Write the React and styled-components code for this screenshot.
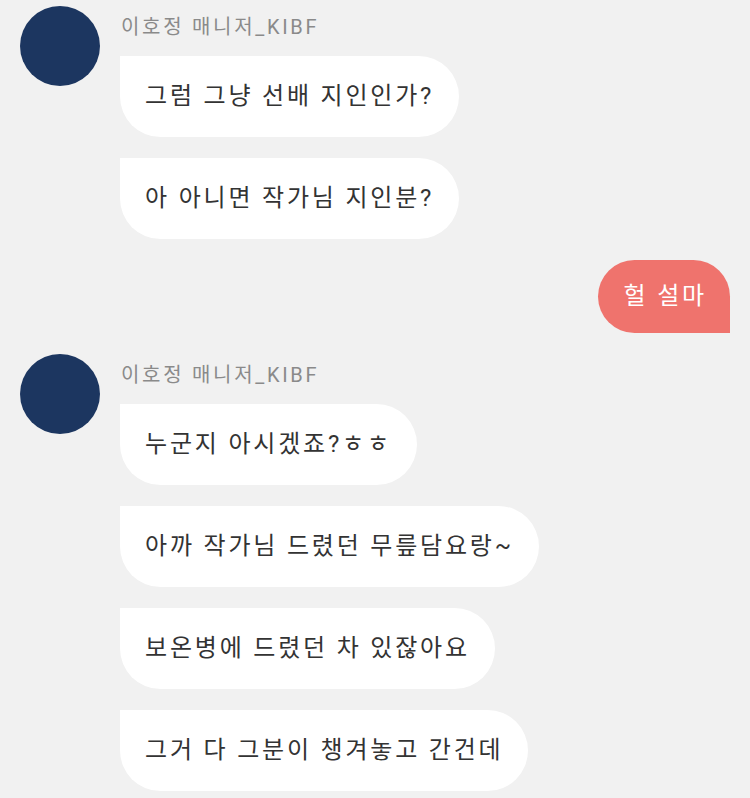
import React from "react";
import styled, { createGlobalStyle } from "styled-components";

const GlobalStyle = createGlobalStyle`
  html, body {
    margin: 0;
    padding: 0;
    background: #f1f1f1;
  }
  body {
    font-family: Roboto, "Noto Sans CJK KR", sans-serif;
  }
`;

const Page = styled.div`
  width: 750px;
  height: 798px;
  overflow: hidden;
  background: #f1f1f1;
  display: flex;
  flex-direction: column;
  gap: 21px;
  padding-top: 6px;
  box-sizing: border-box;
`;

const Group = styled.div`
  display: flex;
  align-items: flex-start;
  gap: 20px;
  padding-left: 20px;
`;

const Avatar = styled.div`
  width: 80px;
  height: 80px;
  border-radius: 50%;
  background: #1c3660;
  flex-shrink: 0;
`;

const Column = styled.div`
  display: flex;
  flex-direction: column;
  align-items: flex-start;
  gap: 21px;
`;

const Name = styled.div`
  font-size: 20px;
  line-height: 30px;
  letter-spacing: 2.7px;
  color: #8a8a8a;
  margin: 6px 0 -7px 1px;
`;

const Bubble = styled.div`
  background: ${({ $mine }) => ($mine ? "#ef736d" : "#ffffff")};
  color: ${({ $mine }) => ($mine ? "#ffffff" : "#333333")};
  font-size: 24px;
  line-height: 33px;
  letter-spacing: 2.8px;
  padding: ${({ $mine }) => ($mine ? "20px 23px 20px 26px" : "24px 25px 24px 25px")};
  border-radius: ${({ $mine }) => ($mine ? "37px 37px 0 37px" : "0 41px 41px 41px")};
  white-space: nowrap;
`;

const SentRow = styled.div`
  display: flex;
  justify-content: flex-end;
  padding-right: 20px;
`;

const chats = [
  {
    name: "이호정 매니저_KIBF",
    lines: ["그럼 그냥 선배 지인인가?", "아 아니면 작가님 지인분?"],
  },
  { mine: true, lines: ["헐 설마"] },
  {
    name: "이호정 매니저_KIBF",
    lines: [
      "누군지 아시겠죠?ㅎㅎ",
      "아까 작가님 드렸던 무릎담요랑~",
      "보온병에 드렸던 차 있잖아요",
      "그거 다 그분이 챙겨놓고 간건데",
    ],
  },
];

const App = () => {
  return (
    <>
      <GlobalStyle />
      <Page>
        {chats.map((chat, i) =>
          chat.mine ? (
            chat.lines.map((line, j) => (
              <SentRow key={`${i}-${j}`}>
                <Bubble $mine>{line}</Bubble>
              </SentRow>
            ))
          ) : (
            <Group key={i}>
              <Avatar />
              <Column>
                <Name>{chat.name}</Name>
                {chat.lines.map((line, j) => (
                  <Bubble key={j}>{line}</Bubble>
                ))}
              </Column>
            </Group>
          )
        )}
      </Page>
    </>
  );
};

export default App;
